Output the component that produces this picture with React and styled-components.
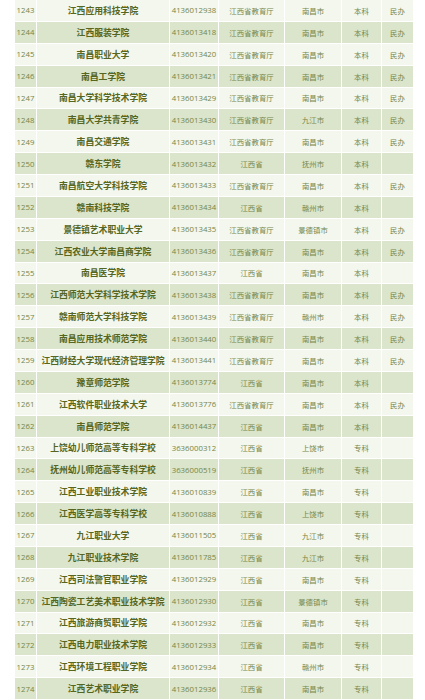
import React from "react";
import styled, { createGlobalStyle } from "styled-components";

const Global = createGlobalStyle`
  html, body { margin: 0; padding: 0; background: #ffffff; }
  body { font-family: "Open Sans", "Noto Sans CJK SC", sans-serif; }
`;

const Page = styled.div`
  width: 425px;
  height: 700px;
  overflow: hidden;
  padding-left: 15px;
  box-sizing: border-box;
`;

const Table = styled.div`
  width: 398px;
  display: grid;
  grid-auto-rows: 20.875px;
  row-gap: 1px;
  background: #ffffff;
`;

const Row = styled.div`
  display: grid;
  grid-template-columns: 21px 132px 48px 65px 56px 39px 31px;
  column-gap: 1px;
  background: #ffffff;
  --cell-bg: ${(p) => (p.$alt ? "#dbe5cb" : "#f3f7ee")};
`;

const Cell = styled.div`
  background: var(--cell-bg);
  display: flex;
  align-items: center;
  justify-content: center;
  white-space: nowrap;
  overflow: hidden;
  color: #76864a;
  font-size: ${(p) => (p.$num ? "7.8px" : "7.4px")};
  font-family: ${(p) =>
    p.$num ? '"Open Sans", "Noto Sans CJK SC", sans-serif' : '"Noto Sans CJK SC", sans-serif'};
`;

const Name = styled(Cell)`
  color: #566620;
  font-size: 8.8px;
  font-weight: 700;
  font-family: "Noto Sans CJK SC", sans-serif;
`;

const data = [
  ["1243", "江西应用科技学院", "4136012938", "江西省教育厅", "南昌市", "本科", "民办"],
  ["1244", "江西服装学院", "4136013418", "江西省教育厅", "南昌市", "本科", "民办"],
  ["1245", "南昌职业大学", "4136013420", "江西省教育厅", "南昌市", "本科", "民办"],
  ["1246", "南昌工学院", "4136013421", "江西省教育厅", "南昌市", "本科", "民办"],
  ["1247", "南昌大学科学技术学院", "4136013429", "江西省教育厅", "南昌市", "本科", "民办"],
  ["1248", "南昌大学共青学院", "4136013430", "江西省教育厅", "九江市", "本科", "民办"],
  ["1249", "南昌交通学院", "4136013431", "江西省教育厅", "南昌市", "本科", "民办"],
  ["1250", "赣东学院", "4136013432", "江西省", "抚州市", "本科", ""],
  ["1251", "南昌航空大学科技学院", "4136013433", "江西省教育厅", "南昌市", "本科", "民办"],
  ["1252", "赣南科技学院", "4136013434", "江西省", "赣州市", "本科", ""],
  ["1253", "景德镇艺术职业大学", "4136013435", "江西省教育厅", "景德镇市", "本科", "民办"],
  ["1254", "江西农业大学南昌商学院", "4136013436", "江西省教育厅", "南昌市", "本科", "民办"],
  ["1255", "南昌医学院", "4136013437", "江西省", "南昌市", "本科", ""],
  ["1256", "江西师范大学科学技术学院", "4136013438", "江西省教育厅", "南昌市", "本科", "民办"],
  ["1257", "赣南师范大学科技学院", "4136013439", "江西省教育厅", "赣州市", "本科", "民办"],
  ["1258", "南昌应用技术师范学院", "4136013440", "江西省教育厅", "南昌市", "本科", "民办"],
  ["1259", "江西财经大学现代经济管理学院", "4136013441", "江西省教育厅", "南昌市", "本科", "民办"],
  ["1260", "豫章师范学院", "4136013774", "江西省", "南昌市", "本科", ""],
  ["1261", "江西软件职业技术大学", "4136013776", "江西省教育厅", "南昌市", "本科", "民办"],
  ["1262", "南昌师范学院", "4136014437", "江西省", "南昌市", "本科", ""],
  ["1263", "上饶幼儿师范高等专科学校", "3636000312", "江西省", "上饶市", "专科", ""],
  ["1264", "抚州幼儿师范高等专科学校", "3636000519", "江西省", "抚州市", "专科", ""],
  ["1265", "江西工业职业技术学院", "4136010839", "江西省", "南昌市", "专科", ""],
  ["1266", "江西医学高等专科学校", "4136010888", "江西省", "上饶市", "专科", ""],
  ["1267", "九江职业大学", "4136011505", "江西省", "九江市", "专科", ""],
  ["1268", "九江职业技术学院", "4136011785", "江西省", "九江市", "专科", ""],
  ["1269", "江西司法警官职业学院", "4136012929", "江西省", "南昌市", "专科", ""],
  ["1270", "江西陶瓷工艺美术职业技术学院", "4136012930", "江西省", "景德镇市", "专科", ""],
  ["1271", "江西旅游商贸职业学院", "4136012932", "江西省", "南昌市", "专科", ""],
  ["1272", "江西电力职业技术学院", "4136012933", "江西省", "南昌市", "专科", ""],
  ["1273", "江西环境工程职业学院", "4136012934", "江西省", "赣州市", "专科", ""],
  ["1274", "江西艺术职业学院", "4136012936", "江西省", "南昌市", "专科", ""],
];

export default function App() {
  return (
    <>
      <Global />
      <Page>
        <Table>
          {data.map((r) => (
            <Row key={r[0]} $alt={Number(r[0]) % 2 === 0}>
              <Cell $num>{r[0]}</Cell>
              <Name>{r[1]}</Name>
              <Cell $num>{r[2]}</Cell>
              <Cell>{r[3]}</Cell>
              <Cell>{r[4]}</Cell>
              <Cell>{r[5]}</Cell>
              <Cell>{r[6]}</Cell>
            </Row>
          ))}
        </Table>
      </Page>
    </>
  );
}
